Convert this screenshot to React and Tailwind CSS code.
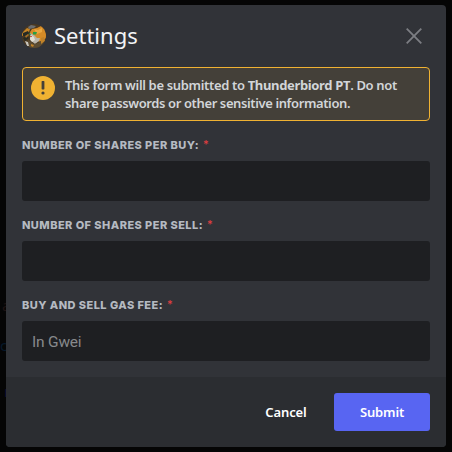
function Avatar() {
  return (
    <svg className="size-6 shrink-0" viewBox="0 0 24 24">
      <defs>
        <clipPath id="avatar">
          <circle cx="12" cy="12" r="12" />
        </clipPath>
      </defs>
      <g clipPath="url(#avatar)">
        <rect width="24" height="24" fill="#4a3820" />
        <path d="M0 9l5-5 3 1-1 3-4 3-3 1z" fill="#c58425" />
        <path d="M6 3l3-2 5 1-2 2-5 1z" fill="#6b6e70" />
        <path d="M10 5l5-1 6-3 3 6v7l-4 4-5-1-6-4-1-5z" fill="#d48b27" />
        <path d="M12 5l4 1 4-2v4l-5 2z" fill="#eaa840" />
        <path d="M1 9l5-2 1 2-3 3-3 0zM1 14l4-2 2 2-4 3z" fill="#252a24" />
        <path d="M3 12l3-2 1 1-3 3z" fill="#a56f25" />
        <path d="M8 9l4 2 3 3 3 0-1 3-4 3-5-4z" fill="#b9b5ab" />
        <path d="M9 11l3 2 1 3-3 2-2-3z" fill="#e3dfd3" />
        <path d="M11 8l4 0-1 2.500-3 0zM7 9l2 1-1 1.500z" fill="#25a047" />
        <path d="M8 12h2v1H8z" fill="#c95b50" />
        <path d="M6 16l2 1 4 3 4-1 4-3 2 3-6 6H7z" fill="#5c4c32" />
        <path d="M3 17l3 1 1 4-2 0z" fill="#c8c5bc" />
        <path d="M19 14l3-1 1 4-4 3zM9 20l3 1-1 2-2-1z" fill="#c08229" />
      </g>
    </svg>
  );
}

function Field({ label, placeholder }) {
  return (
    <div className="h-20">
      <label className="flex h-4 items-center font-['Inter',sans-serif] text-[11px] leading-4 font-extrabold text-[#b5bac1]">
        <span className="tracking-[0.45px]">{label}</span>
        <span className="ml-1 pb-0.5 font-medium text-[#e03e41]">*</span>
      </label>
      <input
        placeholder={placeholder}
        className="mt-2 block h-10 w-full rounded-[3px] bg-[#1e1f22] px-2.5 pt-px font-['Roboto',sans-serif] text-[15.5px] tracking-[-0.2px] text-[#dbdee1] outline-none placeholder:text-[#87898c]"
      />
    </div>
  );
}

export default function App() {
  return (
    <div className="relative h-[452px] w-[452px] overflow-hidden bg-[#050505] pt-[5px] pl-1.5 font-['Noto_Sans',sans-serif]">
      <span className="absolute top-[295px] left-0.5 text-[15px] leading-5 text-[#1d1212]">a</span>
      <span className="absolute top-[335px] left-0 text-[15px] leading-5 text-[#06182a]">c</span>
      <span className="absolute top-[381px] left-1 text-[15px] leading-5 text-[#10102e]">r</span>
      <div className="relative flex h-[442px] w-[440px] flex-col overflow-hidden rounded-[4px] bg-[#313338]">
        <header className="flex h-[62px] shrink-0 items-center px-4">
          <Avatar />
          <h1 className="ml-2 pb-0.5 text-[22px] leading-7 text-[#f2f3f5]">Settings</h1>
          <button className="ml-auto flex size-8 items-center justify-center">
            <svg className="size-4" viewBox="0 0 16 16" fill="none" stroke="#7c7e83" strokeWidth="1.8">
              <path d="M.7.7l14.6 14.6M15.3.7L.7 15.3" />
            </svg>
          </button>
        </header>
        <main className="h-[310px] shrink-0 px-4">
          <div className="flex h-[54px] rounded-[4px] border border-[#f0b232] bg-[#444039] pt-2 pl-2">
            <svg className="size-6 shrink-0" viewBox="0 0 24 24">
              <circle cx="12" cy="12" r="12" fill="#f0b232" />
              <rect x="10.600" y="5" width="2.800" height="8.500" rx=".7" fill="#444039" />
              <circle cx="12" cy="17" r="1.600" fill="#444039" />
            </svg>
            <p className="ml-2.5 text-[13px] leading-[18px] font-semibold whitespace-nowrap text-[#d2d5d8]">
              <span className="block tracking-[-0.34px]">
                This form will be submitted to <strong className="font-bold">Thunderbiord PT</strong>. Do not
              </span>
              <span className="block tracking-[-0.39px]">share passwords or other sensitive information.</span>
            </p>
          </div>
          <div className="pt-4">
            <Field label="NUMBER OF SHARES PER BUY:" />
            <Field label="NUMBER OF SHARES PER SELL:" />
            <Field label="BUY AND SELL GAS FEE:" placeholder="In Gwei" />
          </div>
        </main>
        <footer className="flex flex-1 items-center justify-end bg-[#2b2d31] px-4 text-[13px] font-semibold text-white">
          <button className="h-[38px] w-24 pt-px tracking-[-0.1px]">Cancel</button>
          <button className="h-[38px] w-24 rounded-[3px] bg-[#5865f2] pt-px tracking-[-0.15px]">Submit</button>
        </footer>
      </div>
    </div>
  );
}
